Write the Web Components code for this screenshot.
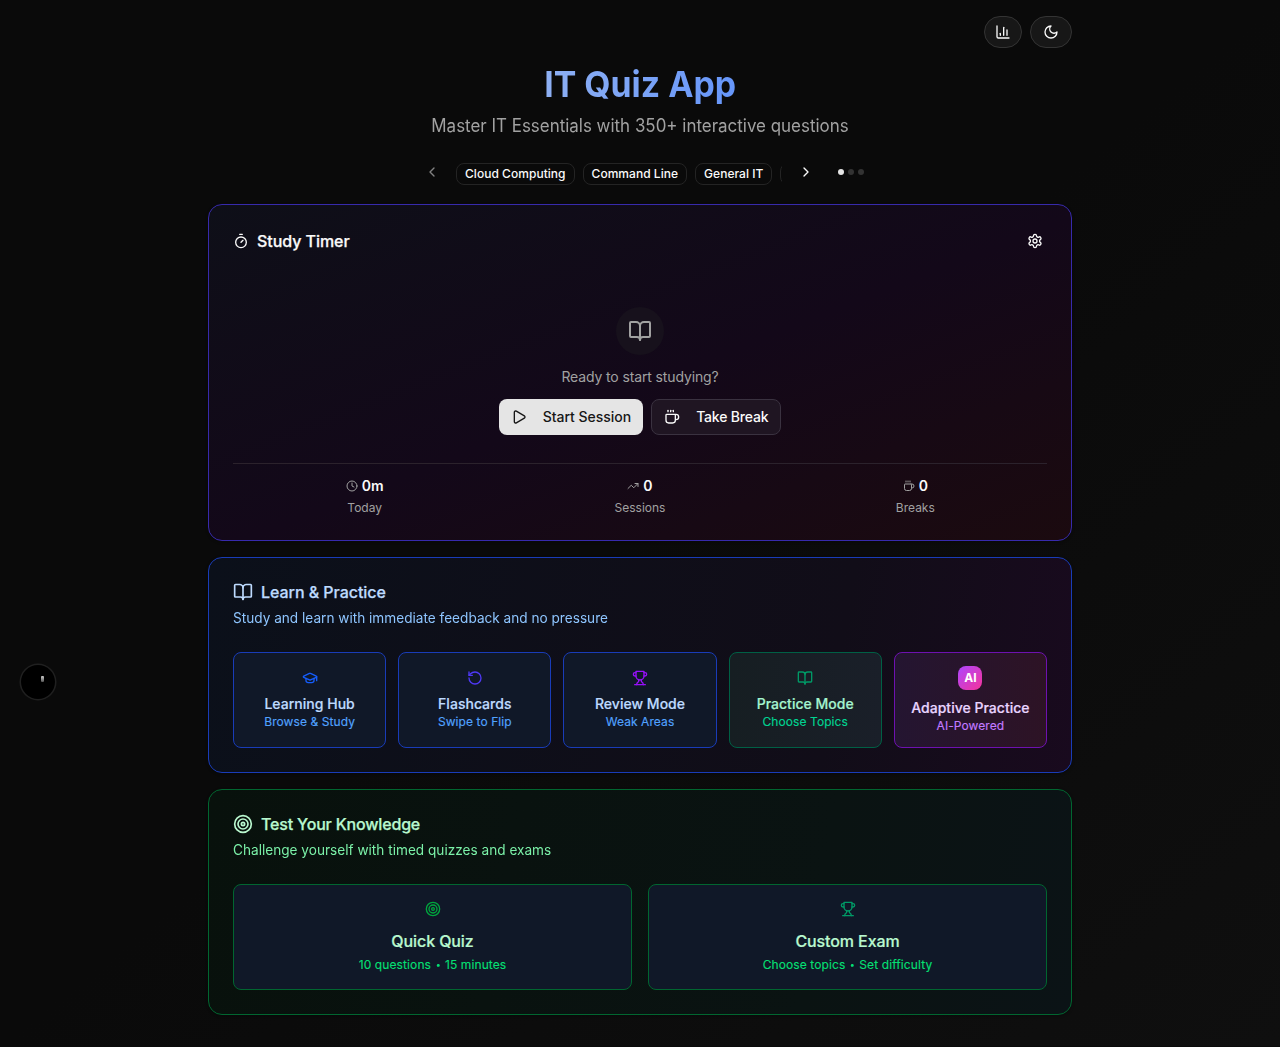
<!DOCTYPE html>
<html lang="en">
<head>
<meta charset="utf-8">
<title>IT Quiz App</title>
<style>
html,body{margin:0;padding:0}
body{min-height:1047px;background:#0a0a0a;color:#fafafa;font-family:Inter,"Liberation Sans",sans-serif;-webkit-font-smoothing:antialiased}
</style>
</head>
<body>
<quiz-app></quiz-app>
<script>
const ICONS = {
  chart:'<path d="M3 3v16a2 2 0 0 0 2 2h16"/><path d="M18 17V9"/><path d="M13 17V5"/><path d="M8 17v-3"/>',
  moon:'<path d="M12 3a6 6 0 0 0 9 9 9 9 0 1 1-9-9Z"/>',
  left:'<path d="m15 18-6-6 6-6"/>',
  right:'<path d="m9 18 6-6-6-6"/>',
  timer:'<line x1="10" x2="14" y1="2" y2="2"/><line x1="12" x2="15" y1="14" y2="11"/><circle cx="12" cy="14" r="8"/>',
  gear:'<path d="M12.22 2h-.44a2 2 0 0 0-2 2v.18a2 2 0 0 1-1 1.73l-.43.25a2 2 0 0 1-2 0l-.15-.08a2 2 0 0 0-2.73.73l-.22.38a2 2 0 0 0 .73 2.73l.15.1a2 2 0 0 1 1 1.72v.51a2 2 0 0 1-1 1.74l-.15.09a2 2 0 0 0-.73 2.73l.22.38a2 2 0 0 0 2.73.73l.15-.08a2 2 0 0 1 2 0l.43.25a2 2 0 0 1 1 1.73V20a2 2 0 0 0 2 2h.44a2 2 0 0 0 2-2v-.18a2 2 0 0 1 1-1.73l.43-.25a2 2 0 0 1 2 0l.15.08a2 2 0 0 0 2.73-.73l.22-.39a2 2 0 0 0-.73-2.73l-.15-.08a2 2 0 0 1-1-1.74v-.5a2 2 0 0 1 1-1.74l.15-.09a2 2 0 0 0 .73-2.73l-.22-.38a2 2 0 0 0-2.73-.73l-.15.08a2 2 0 0 1-2 0l-.43-.25a2 2 0 0 1-1-1.73V4a2 2 0 0 0-2-2z"/><circle cx="12" cy="12" r="3"/>',
  book:'<path d="M12 7v14"/><path d="M3 18a1 1 0 0 1-1-1V4a1 1 0 0 1 1-1h5a4 4 0 0 1 4 4 4 4 0 0 1 4-4h5a1 1 0 0 1 1 1v13a1 1 0 0 1-1 1h-6a3 3 0 0 0-3 3 3 3 0 0 0-3-3z"/>',
  play:'<path d="M5 5a2 2 0 0 1 3.008-1.728l11.997 6.998a2 2 0 0 1 .003 3.458l-12 7A2 2 0 0 1 5 19z"/>',
  coffee:'<path d="M10 2v2"/><path d="M14 2v2"/><path d="M16 8a1 1 0 0 1 1 1v8a4 4 0 0 1-4 4H7a4 4 0 0 1-4-4V9a1 1 0 0 1 1-1h14a4 4 0 1 1 0 8h-1"/><path d="M6 2v2"/>',
  clock:'<circle cx="12" cy="12" r="10"/><path d="M12 6v6l4 2"/>',
  trend:'<path d="M16 7h6v6"/><path d="m22 7-8.5 8.5-5-5L2 17"/>',
  cap:'<path d="M21.42 10.922a1 1 0 0 0-.019-1.838L12.83 5.18a2 2 0 0 0-1.66 0L2.6 9.08a1 1 0 0 0 0 1.832l8.57 3.908a2 2 0 0 0 1.66 0z"/><path d="M22 10v6"/><path d="M6 12.5V16a6 3 0 0 0 12 0v-3.5"/>',
  rotate:'<path d="M3 12a9 9 0 1 0 9-9 9.75 9.75 0 0 0-6.74 2.74L3 8"/><path d="M3 3v5h5"/>',
  trophy:'<path d="M6 9H4.5a2.5 2.5 0 0 1 0-5H6"/><path d="M18 9h1.5a2.5 2.5 0 0 0 0-5H18"/><path d="M4 22h16"/><path d="M10 14.66V17c0 .55-.47.98-.97 1.21C7.85 18.75 7 20.24 7 22"/><path d="M14 14.66V17c0 .55.47.98.97 1.21C16.15 18.75 17 20.24 17 22"/><path d="M18 2H6v7a6 6 0 0 0 12 0V2Z"/>',
  target:'<circle cx="12" cy="12" r="10"/><circle cx="12" cy="12" r="6"/><circle cx="12" cy="12" r="2"/>'
};

const define = (name, html) => customElements.define(name, class extends HTMLElement {
  constructor() {
    super();
    const t = document.createElement('template');
    t.innerHTML = html;
    this.attachShadow({mode: 'open'}).append(t.content.cloneNode(true));
  }
});

customElements.define('ui-icon', class extends HTMLElement {
  connectedCallback() {
    if (this.shadowRoot) return;
    const s = this.getAttribute('size') || 16;
    this.attachShadow({mode: 'open'}).innerHTML =
      `<style>:host{display:block;flex:none;width:${s}px;height:${s}px}svg{display:block}</style>
       <svg width="${s}" height="${s}" viewBox="0 0 24 24" fill="none" stroke="currentColor" stroke-width="2" stroke-linecap="round" stroke-linejoin="round">${ICONS[this.getAttribute('name')]}</svg>`;
  }
});

define('pill-button', `<style>
  :host{display:flex;align-items:center;justify-content:center;box-sizing:border-box;width:38px;height:32px;border:1px solid #343434;border-radius:16px;background:#171717;color:#fafafa}
</style><slot></slot>`);

define('topic-chip', `<style>
  :host{display:block;flex:none;box-sizing:border-box;height:22px;padding:2px 8px;border:1px solid #242424;border-radius:8px;font-size:12px;line-height:16px;font-weight:500;letter-spacing:.035px;white-space:nowrap;color:#fafafa}
</style><slot></slot>`);

define('topic-carousel', `<style>
  :host{display:flex;align-items:center;width:448px;height:32px;margin:16px auto 0}
  .nav{display:flex;align-items:center;justify-content:center;width:32px;height:32px;flex:none}
  .prev{opacity:.5}
  .track{display:flex;gap:8px;flex:1;margin:0 8px;padding:7px 0 3px;overflow:hidden}
  .dots{display:flex;gap:4px;margin-left:16px}
  i{width:6px;height:6px;border-radius:50%;background:#333}
  i.on{background:#e5e5e5}
</style>
<div class="nav prev"><ui-icon name="left"></ui-icon></div>
<div class="track"><slot></slot></div>
<div class="nav"><ui-icon name="right"></ui-icon></div>
<div class="dots"><i class="on"></i><i></i><i></i></div>`);

define('action-button', `<style>
  :host{display:flex;align-items:center;box-sizing:border-box;height:36px;padding:0 12px;gap:16px;border:1px solid #3a3240;border-radius:8px;background:#1f1522;font-size:14px;line-height:20px;font-weight:500;letter-spacing:-.18px;color:#fafafa;white-space:nowrap}
  :host([primary]){background:#e5e5e5;border:0;color:#171717;letter-spacing:-.02px}
</style><slot name="icon"></slot><slot></slot>`);

define('stat-item', `<style>
  :host{display:flex;flex-direction:column;align-items:center;gap:4px;flex:1}
  .v{display:flex;align-items:center;gap:4px;font-size:14px;line-height:20px;font-weight:600}
  .l{font-size:12px;line-height:16px;color:#a1a1a1}
  ::slotted(ui-icon){color:#a1a1a1}
</style><div class="v"><slot name="icon"></slot><slot name="value"></slot></div><div class="l"><slot></slot></div>`);

define('study-timer', `<style>
  :host{display:flex;flex-direction:column;box-sizing:border-box;height:337px;padding:24px;border:1px solid #372aac;border-radius:14px;background:linear-gradient(to bottom right,#0e0f18,#130819 52%,#1b0a0f);box-shadow:0 1px 3px rgba(0,0,0,.3)}
  header{display:flex;align-items:center;height:24px;gap:8px;font-size:16px;font-weight:500;line-height:24px;letter-spacing:-.05px}
  header span{-webkit-text-stroke:.25px currentColor}
  header .gear{margin-left:auto;padding:4px}
  .idle{display:flex;flex-direction:column;align-items:center;margin-top:54px}
  .disc{display:flex;align-items:center;justify-content:center;width:48px;height:48px;border-radius:50%;background:#17111c;color:#a1a1a1}
  p{margin:12px 0;font-size:14px;line-height:20px;letter-spacing:-.13px;color:#a1a1a1}
  .row{display:flex;gap:8px}
  .stats{display:flex;gap:12px;margin-top:auto;padding-top:12px;border-top:1px solid #2b222c}
</style>
<header><ui-icon name="timer"></ui-icon><span>Study Timer</span><div class="gear"><ui-icon name="gear"></ui-icon></div></header>
<div class="idle">
  <div class="disc"><ui-icon name="book" size="24"></ui-icon></div>
  <p>Ready to start studying?</p>
  <div class="row">
    <action-button primary><ui-icon slot="icon" name="play"></ui-icon>Start Session</action-button>
    <action-button><ui-icon slot="icon" name="coffee"></ui-icon>Take Break</action-button>
  </div>
</div>
<div class="stats">
  <stat-item><ui-icon slot="icon" name="clock" size="12"></ui-icon><span slot="value">0m</span>Today</stat-item>
  <stat-item><ui-icon slot="icon" name="trend" size="12"></ui-icon><span slot="value">0</span>Sessions</stat-item>
  <stat-item><ui-icon slot="icon" name="coffee" size="12"></ui-icon><span slot="value">0</span>Breaks</stat-item>
</div>`);

define('section-card', `<style>
  :host{display:block;box-sizing:border-box;padding:24px;margin-top:16px;border:1px solid var(--line);border-radius:14px;background:var(--fill);box-shadow:0 1px 3px rgba(0,0,0,.3)}
  .t{display:flex;align-items:center;gap:8px;height:20px;font-size:16px;line-height:20px;font-weight:500;-webkit-text-stroke:.25px currentColor;letter-spacing:var(--track);color:var(--head)}
  .s{margin-top:6px;font-size:14px;line-height:20px;color:var(--sub);transform:scaleX(.973);transform-origin:left}
  .tiles{display:flex;gap:var(--gap);margin-top:24px}
</style>
<div class="t"><slot name="icon"></slot><slot name="title"></slot></div>
<div class="s"><slot name="sub"></slot></div>
<div class="tiles"><slot></slot></div>`);

define('mode-tile', `<style>
  :host{display:flex;flex:1 1 0;min-width:0;flex-direction:column;align-items:center;justify-content:center;box-sizing:border-box;height:96px;border:1px solid var(--tl,#193cb8);border-radius:8px;background:var(--tb,#101828);white-space:nowrap}
  .t{margin-top:8px;font-size:14px;line-height:20px;font-weight:500;-webkit-text-stroke:.2px currentColor;letter-spacing:.02px;color:var(--tt,#bedbff)}
  .s{font-size:12px;line-height:16px;font-weight:400;-webkit-text-stroke:.15px currentColor;letter-spacing:.08px;color:var(--ts,#51a2ff)}
  :host([large]){height:106px}
  :host([large]) .t{margin:12px 0 4px;font-size:16px;line-height:24px;letter-spacing:-.1px}
  :host([large]) .s{letter-spacing:.11px}
  ::slotted(ui-icon){color:var(--ti)}
</style><slot name="icon"></slot><div class="t"><slot name="title"></slot></div><div class="s"><slot></slot></div>`);

define('ai-badge', `<style>
  :host{display:flex;align-items:center;justify-content:center;width:24px;height:24px;border-radius:8px;background:linear-gradient(to bottom right,#ad46ff,#f6339a);color:#fff;font-size:12px;line-height:16px;font-weight:700}
</style><slot></slot>`);

define('corner-badge', `<style>
  :host{position:fixed;left:21px;top:665px;box-sizing:border-box;width:34px;height:34px;border-radius:50%;background:#000;box-shadow:0 0 0 1.5px #202020}
  b{position:absolute;left:20px;top:11px;width:2.5px;height:6px;border-radius:1px;background:linear-gradient(#ccc,#555)}
</style><b></b>`);

define('quiz-app', `<style>
  :host{display:block;height:1046px;background:linear-gradient(to bottom right,#0a0a0a 50%,#0f0f0f)}
  main{width:864px;margin:0 auto;padding-top:16px}
  .tools{display:flex;justify-content:flex-end;gap:8px}
  .wide{width:42px}
  h1{width:max-content;margin:16px auto 0;font-size:36px;line-height:40px;font-weight:700;transform:scaleX(.94)}
  h1 span{background:linear-gradient(to right,#8eb0f3,#6696fa);-webkit-background-clip:text;background-clip:text;color:transparent}
  .lead{margin:8px 0 0;text-align:center;font-size:18px;line-height:28px;transform:scaleX(.941);color:#a1a1a1}
  study-timer{margin-top:16px}
  .learn{--line:#193cb8;--fill:linear-gradient(100deg,#0b101a,#110d18 72%,#190a1e);--head:#bedbff;--sub:#8ec5ff;--gap:12px;--track:-.04px}
  .test{--line:#016630;--fill:linear-gradient(100deg,#08110c,#0a1312 70%,#0b1316);--head:#b9f8cf;--sub:#7bf1a8;--gap:16px;--track:-.17px}
  .test mode-tile{--tl:#016630;--tt:#b9f8cf;--ts:#05df72;--tb:#101828}
  .learn > ui-icon,.test > ui-icon{color:var(--head)}
  .dot{display:inline-block;transform:scale(.75)}
</style>
<main>
  <div class="tools"><pill-button><ui-icon name="chart"></ui-icon></pill-button><pill-button class="wide"><ui-icon name="moon"></ui-icon></pill-button></div>
  <h1><span>IT Quiz App</span></h1>
  <p class="lead">Master IT Essentials with 350+ interactive questions</p>
  <topic-carousel><topic-chip>Cloud Computing</topic-chip><topic-chip>Command Line</topic-chip><topic-chip>General IT</topic-chip><topic-chip style="width:90px"></topic-chip></topic-carousel>
  <study-timer></study-timer>
  <section-card class="learn">
    <ui-icon slot="icon" name="book" size="20"></ui-icon><span slot="title">Learn &amp; Practice</span>
    <span slot="sub">Study and learn with immediate feedback and no pressure</span>
    <mode-tile style="--ti:#155dfc"><ui-icon slot="icon" name="cap"></ui-icon><span slot="title">Learning Hub</span>Browse &amp; Study</mode-tile>
    <mode-tile style="--ti:#4f39f6"><ui-icon slot="icon" name="rotate"></ui-icon><span slot="title">Flashcards</span>Swipe to Flip</mode-tile>
    <mode-tile style="--ti:#9810fa"><ui-icon slot="icon" name="trophy"></ui-icon><span slot="title">Review Mode</span>Weak Areas</mode-tile>
    <mode-tile style="--ti:#009966;--tl:#006045;--tb:linear-gradient(to right,#161e22,#1a1f29);--tt:#a4f4cf;--ts:#00d492"><ui-icon slot="icon" name="book"></ui-icon><span slot="title">Practice Mode</span>Choose Topics</mode-tile>
    <mode-tile style="--tl:#6e11b0;--tb:linear-gradient(to right,#241531,#2d1325);--tt:#e9d4ff;--ts:#c27aff"><ai-badge slot="icon">AI</ai-badge><span slot="title">Adaptive Practice</span>AI-Powered</mode-tile>
  </section-card>
  <section-card class="test">
    <ui-icon slot="icon" name="target" size="20"></ui-icon><span slot="title">Test Your Knowledge</span>
    <span slot="sub">Challenge yourself with timed quizzes and exams</span>
    <mode-tile large style="--ti:#00a63e"><ui-icon slot="icon" name="target"></ui-icon><span slot="title">Quick Quiz</span>10 questions <span class="dot">•</span> 15 minutes</mode-tile>
    <mode-tile large style="--ti:#009966"><ui-icon slot="icon" name="trophy"></ui-icon><span slot="title">Custom Exam</span>Choose topics <span class="dot">•</span> Set difficulty</mode-tile>
  </section-card>
</main>
<corner-badge></corner-badge>`);
</script>
</body>
</html>
